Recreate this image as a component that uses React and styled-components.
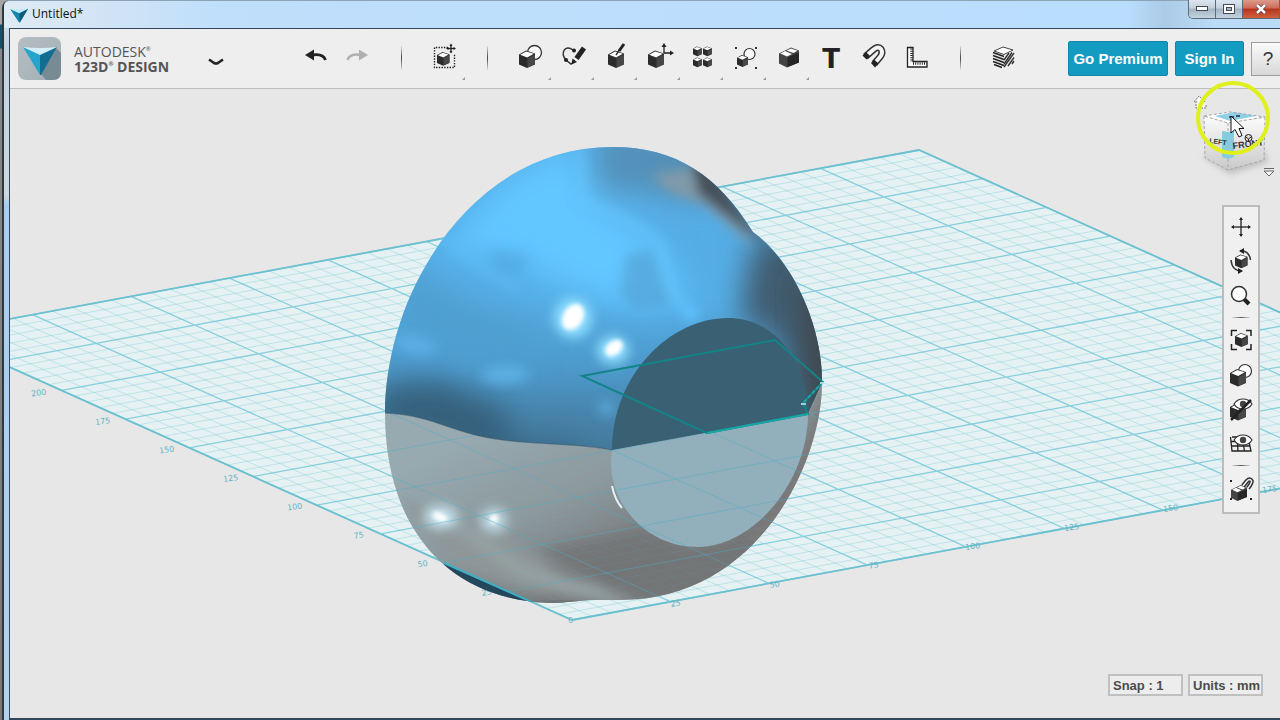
import React from 'react';
import styled, { createGlobalStyle } from 'styled-components';

const GlobalStyle = createGlobalStyle`
  * {
    box-sizing: border-box;
  }
  body {
    margin: 0;
    background: #7d7d7d;
    font-family: "Liberation Sans", Arial, sans-serif;
    overflow: hidden;
  }
  button {
    font-family: inherit;
    padding: 0;
    cursor: pointer;
  }
`;

const Desktop = styled.div`
  min-height: 100vh;
  display: flex;
  padding-left: 2px;
  background: linear-gradient(#a5a5a5 24px, #17506b 25px, #17506b 48px, #85888a 49px, #777 100%);
`;

const Window = styled.div`
  flex: 1;
  min-width: 0;
  display: flex;
  flex-direction: column;
  padding-left: 5px;
  border-left: 2px solid #30373d;
  border-top-left-radius: 8px;
  background: linear-gradient(#d3e4f2, #c3d3de 50px, #ccd6dc 195px, #a8cdf0 205px, #b4d0ea);
`;

const TitleBar = styled.header`
  height: 28px;
  display: flex;
  align-items: flex-start;
  gap: 3px;
  margin-left: -5px;
  padding: 4px 0 0 5px;
  border-top: 1px solid #8ba3b5;
  border-top-left-radius: 6px;
  background: linear-gradient(90deg, #dfebf5, #cfe3f6 9%, #bfdffb 17%, #b9ddfd 88%, #abcbe6 91%, #bbdcf9 95%);
`;

const Title = styled.h1`
  flex: 1;
  margin: 0;
  font: 12px/18px "Open Sans", "Noto Sans", sans-serif;
  color: #111;
`;

const WindowControls = styled.div`
  display: flex;
  height: 19px;
  margin-top: -5px;
  border: 1px solid #5d6b78;
  border-right: 0;
  border-top: 0;
  border-bottom-left-radius: 5px;
  overflow: hidden;
`;

const WindowButton = styled.button`
  width: ${({ $close }) => ($close ? '37px' : '27px')};
  height: 18px;
  display: flex;
  align-items: center;
  justify-content: center;
  border: 0;
  border-right: 1px solid #5d6b78;
  background: ${({ $close }) =>
		$close
			? 'linear-gradient(#dd9a8c, #cf6a56 45%, #b8341c 50%, #cf6040)'
			: 'linear-gradient(#dbe6f0, #c3d0dc 45%, #a4b3c1 50%, #c3d3e0)'};
`;

const Client = styled.main`
  flex: 1;
  display: flex;
  flex-direction: column;
  border: solid #33485c;
  border-width: 1px 0 2px 1px;
  background: #e7e7e7;
`;

const Toolbar = styled.div`
  height: 60px;
  display: flex;
  align-items: center;
  flex: none;
  padding-left: 8px;
  border-bottom: 1px solid #bdbdbd;
  background: #eeeeee;
  overflow: hidden;
`;

const Brand = styled.div`
  width: 108px;
  margin-left: 13px;
  color: #555;
  font: 14px/15px "Open Sans", "Noto Sans", sans-serif;
  white-space: nowrap;
`;

const BrandLine = styled.div`
  font-weight: ${({ $bold }) => ($bold ? 700 : 400)};
`;

const Mark = styled.sup`
  font-size: 6px;
  line-height: 6px;
  vertical-align: 6px;
`;

const MenuButton = styled.button`
  width: 43px;
  height: 43px;
  margin: 8px 57px 0 12px;
  border: 0;
  background: none;
`;

const Tools = styled.div`
  display: flex;
  flex: 1;
`;

const Tool = styled.button`
  width: 43px;
  height: 59px;
  border: 0;
  background: none;
  opacity: ${({ disabled }) => (disabled ? 0.3 : 1)};
  svg {
    display: block;
  }
`;

const Divider = styled.div`
  width: 43px;
  height: 59px;
  display: flex;
  justify-content: center;
  padding: 17px 0 18px;
  &::before {
    content: "";
    width: 1px;
    background: linear-gradient(#ddd, #444 50%, #ddd);
  }
`;

const Account = styled.div`
  display: flex;
  gap: 7px;
  align-items: center;
  margin-right: -5px;
`;

const AccountButton = styled.button`
  width: ${({ $wide }) => ($wide ? '100px' : '69px')};
  height: 35px;
  border: 1px solid #1286a6;
  border-radius: 2px;
  background: #149bc1;
  color: #fff;
  font-size: 15px;
  font-weight: bold;
`;

const HelpButton = styled.button`
  width: 34px;
  height: 34px;
  border: 1px solid #9c9c9c;
  background: linear-gradient(#fafafa, #d8d8d8);
  color: #333;
  font-size: 19px;
`;

const Viewport = styled.section`
  position: relative;
  flex: 1;
  display: flex;
  flex-direction: column;
  justify-content: space-between;
  align-items: flex-end;
  min-height: 620px;
  padding: 116px 17px 22px 0;
`;

const Scene = styled.svg`
  position: absolute;
  inset: 0;
  width: 100%;
  height: 100%;
`;

const CubeWidget = styled.svg`
  position: absolute;
  right: 0;
  top: -9px;
`;

const NavBar = styled.nav`
  position: relative;
  width: 38px;
  margin-right: 3px;
  padding: 3px 0 6px;
  border: 2px solid #bcbcbc;
  background: #f0f0f1;
`;

const NavButton = styled.button`
  display: block;
  width: 34px;
  height: 34px;
  border: 0;
  background: none;
  svg {
    display: block;
  }
`;

const NavDivider = styled.div`
  height: 12px;
  padding: 5px 8px 6px;
  &::before {
    content: "";
    display: block;
    height: 1px;
    background: linear-gradient(90deg, #ddd, #555 50%, #ddd);
  }
`;

const Status = styled.div`
  position: relative;
  display: flex;
  gap: 5px;
`;

const StatusButton = styled.button`
  width: 75px;
  height: 22px;
  padding: 0 3px;
  border: 2px solid #c0c0c0;
  background: #ededed;
  color: #4c4c4c;
  font-size: 13px;
  font-weight: bold;
  text-align: left;
  white-space: nowrap;
`;

/* ---- small drawings ---- */

const Cube = ({ x, y, s = 1 }) => (
	<g transform={`translate(${x} ${y}) scale(${s})`}>
		<path d="M0 4 7 0 16 3 16 14 8 17.5 0 14Z" fill="#2b2b2b" />
		<path d="M8.5 8 16 4V13.500L8.500 17Z" fill="#484848" />
		<path d="M1.200 4.200 7.200 1 14.800 3.300 8.200 7Z" fill="#fff" />
	</g>
);

const WideCube = ({ x, y, s = 1 }) => (
	<g transform={`translate(${x} ${y}) scale(${s})`}>
		<path d="M0 6 12 0 20 3V15L8 20 0 16Z" fill="#444" />
		<path d="M8.500 10 20 5V15L8.500 19.500Z" fill="#262626" />
		<path d="M1.500 6 6 3.500 13 6.500 8 9Z" fill="#fff" />
		<path d="M7.500 3 12 1 18.500 3.300 14.500 5.500Z" fill="#fff" />
	</g>
);

const Cross = ({ x, y, r, h = 2 }) => (
	<g transform={`translate(${x} ${y})`} stroke="#222" strokeWidth="1.300" fill="#222">
		{[0, 90, 180, 270].map((a) => (
			<g key={a} transform={`rotate(${a})`}>
				<path d={`M0 0V${1 - r}`} />
				<path d={`M${-h} ${h + 1 - r}L0 ${-r}L${h} ${h + 1 - r}Z`} stroke="none" />
			</g>
		))}
	</g>
);

const Eye = ({ x, y }) => (
	<g transform={`translate(${x} ${y})`}>
		<path d="M-9 0Q-6 -5 0 -5Q6 -5 9 0Q6 5 0 5Q-6 5 -9 0Z" fill="#fff" stroke="#333" strokeWidth="1.200" />
		<circle r="3.200" fill="#444" />
	</g>
);

const Magnet = ({ d, w = 9 }) => (
	<g fill="none">
		<path d={d} stroke="#333" strokeWidth={w} />
		<path d={d} stroke="#f4f4f4" strokeWidth={w - 3} />
	</g>
);

const Plane = ({ size }) => (
	<svg width={size} height={size} viewBox="0 0 43 43" aria-hidden="true">
		<path d="M3 9 22 16 41 8 23 38Z" fill="#1a9cc4" />
		<path d="M3 9 22 16V38Z" fill="#1687ab" />
		<path d="M22 16 41 8 23 38Z" fill="#0f5a78" />
		<path d="M3 9 20 9 41 8 22 18Z" fill="#bfe9f6" />
	</svg>
);

const Logo = () => (
	<svg width="43" height="43" viewBox="0 0 43 43" role="img" aria-label="123D Design">
		<defs>
			<linearGradient id="logoBg" x1="0" y1="0" x2="1" y2="1">
				<stop offset="0" stopColor="#b5bdc1" />
				<stop offset="1" stopColor="#a3b0b6" />
			</linearGradient>
		</defs>
		<rect width="43" height="43" rx="8" fill="url(#logoBg)" />
		<path d="M38 11 43 16V35Q43 43 35 43H28L23 37Z" fill="#788b95" />
		<path d="M5 10 22 17V38Z" fill="#25a4cd" />
		<path d="M22 17 39 10 23 38H22Z" fill="#126d90" />
		<path d="M5 10Q22 12 39 10L22 18Z" fill="#d4eff8" />
	</svg>
);

const tools = [
	{
		name: 'Undo',
		icon: (
			<g>
				<path d="M11 26 20 20.500V31.500Z" fill="#222" />
				<path d="M18 26Q29 24 31.500 31" fill="none" stroke="#222" strokeWidth="2.800" />
			</g>
		),
	},
	{
		name: 'Redo',
		disabled: true,
		icon: (
			<g>
				<path d="M31 26 22 20.500V31.500Z" fill="#222" />
				<path d="M24 26Q13 24 10.500 31" fill="none" stroke="#222" strokeWidth="2.400" />
			</g>
		),
	},
	{ divider: true, name: 'd1' },
	{
		name: 'Transform selection',
		more: true,
		icon: (
			<g>
				<path d="M25 18.500H11.500V38.500H31.500V25" fill="none" stroke="#222" strokeWidth="1.400" strokeDasharray="1.400 1.300" />
				<Cube x={14} y={23} s={0.78} />
				<Cross x={28} y={19.500} r={5} h={1.500} />
			</g>
		),
	},
	{ divider: true, name: 'd2' },
	{
		name: 'Primitives',
		more: true,
		icon: (
			<g>
				<circle cx="25.500" cy="23.500" r="7" fill="#f8f8f8" stroke="#333" strokeWidth="1.300" />
				<Cube x={10} y={21.500} />
			</g>
		),
	},
	{
		name: 'Sketch',
		more: true,
		icon: (
			<g>
				<path d="M21 21C13 15 8 24 14 31L19 35 23 32" fill="none" stroke="#333" strokeWidth="1.500" />
				<circle cx="22" cy="21.500" r="2" fill="#222" />
				<circle cx="14" cy="31" r="2" fill="#222" />
				<path d="M19.500 35.500 20.500 29.500 25 33Z" fill="#222" />
				<path d="M24.500 29.500 32 19" stroke="#222" strokeWidth="5" />
			</g>
		),
	},
	{
		name: 'Construct',
		more: true,
		icon: (
			<g>
				<Cube x={13} y={21.500} />
				<path d="M21 26 25 20" stroke="#333" strokeWidth="1.500" />
				<path d="M24 22 29 15" stroke="#222" strokeWidth="3" />
			</g>
		),
	},
	{
		name: 'Modify',
		more: true,
		icon: (
			<g>
				<Cube x={10} y={21.500} />
				<path d="M26 24V17M26 24H33" stroke="#222" strokeWidth="1.300" />
				<path d="M23.500 18 26 14 28.500 18ZM32 21.500 36 24 32 26.500Z" fill="#222" />
			</g>
		),
	},
	{
		name: 'Pattern',
		more: true,
		icon: (
			<g>
				<Cube x={12} y={17.500} s={0.55} />
				<Cube x={22} y={17.500} s={0.55} />
				<Cube x={12} y={28.500} s={0.55} />
				<Cube x={22} y={28.500} s={0.55} />
			</g>
		),
	},
	{
		name: 'Grouping',
		more: true,
		icon: (
			<g>
				<circle cx="25.500" cy="25" r="5.500" fill="#f8f8f8" stroke="#333" strokeWidth="1.200" />
				<Cube x={13} y={26} s={0.68} />
				<path d="M11 18h2v2h-2zM31 18h2v2h-2zM11 38h2v2h-2zM31 38h2v2h-2z" fill="#333" />
			</g>
		),
	},
	{ name: 'Combine', more: true, icon: <WideCube x={12} y={18.500} /> },
	{
		name: 'Text',
		icon: (
			<text x="21" y="39" textAnchor="middle" fontFamily="DejaVu Sans" fontWeight="bold" fontSize="26" fill="#222">
				T
			</text>
		),
	},
	{
		name: 'Snap',
		icon: (
			<g>
				<Magnet d="M12.500 27.500 20 21Q25 16.500 28 20Q30.500 24 27 28L21.500 34.500" w={7} />
				<path d="M9.500 26.500 13 23 17 27 13.500 30.500ZM18 34 21 30.500 25.500 34.500 22 38.500Z" fill="#222" />
			</g>
		),
	},
	{
		name: 'Measure',
		icon: (
			<g fill="none" stroke="#222">
				<path d="M11.500 18.500H17V32.500H31V38H11.500Z" fill="#fff" strokeWidth="1.300" />
				<path d="M15.500 19.500V33M17 34.500H30.500" strokeWidth="2.500" strokeDasharray="1 1.200" />
			</g>
		),
	},
	{ divider: true, name: 'd3' },
	{
		name: 'Material',
		icon: (
			<g>
				<path d="M12 22 21 18 31 21 22 25.500Z" fill="#fff" stroke="#444" />
				<path
					d="M11 23.500 22 27.500M11 26.500 22 30.500M11 29.500 22 33.500M11 32.500 22 36.500M12 35.500 20 38.500"
					stroke="#222"
					strokeWidth="1.600"
				/>
				<path d="M22 31 27 24M22 35 30 23.500M22 38 32 24M26 37 32 28.500M30 35 32 32" stroke="#333" strokeWidth="1.400" />
			</g>
		),
	},
];

const navItems = [
	{ name: 'Pan', icon: <Cross x={17} y={17} r={10} h={2} /> },
	{
		name: 'Orbit',
		icon: (
			<g>
				<Cube x={11} y={10.500} s={0.78} />
				<path d="M16 7Q25 6 26.500 16M18 27Q8 27 7 16" fill="none" stroke="#333" strokeWidth="1.500" />
				<path d="M20 4V10L15 7ZM14 24V30L19 27Z" fill="#222" />
			</g>
		),
	},
	{
		name: 'Zoom',
		icon: (
			<g>
				<path d="M20 21 25 26" stroke="#222" strokeWidth="4" />
				<circle cx="15" cy="16" r="7.500" fill="#fff" stroke="#333" strokeWidth="1.500" />
			</g>
		),
	},
	{ divider: true, name: 'n1' },
	{
		name: 'Fit',
		icon: (
			<g>
				<Cube x={11} y={9} s={0.8} />
				<path d="M7.500 12V6.500H13M22 6.500H27V12M27 20V25.500H22M13 25.500H7.500V20" fill="none" stroke="#222" strokeWidth="1.500" />
			</g>
		),
	},
	{
		name: 'Shading',
		icon: (
			<g>
				<circle cx="21" cy="13" r="6.500" fill="#fff" stroke="#333" strokeWidth="1.200" />
				<Cube x={6} y={11} />
			</g>
		),
	},
	{
		name: 'Hide solids',
		icon: (
			<g>
				<Cube x={6} y={11} />
				<Eye x={19} y={12} />
				<path d="M7 28 27 8" stroke="#222" strokeWidth="2.500" />
			</g>
		),
	},
	{
		name: 'Grid visibility',
		icon: (
			<g>
				<path
					d="M8 11H24L27 25H8L6.500 11M7 15.500H26M7 20H26M13 11 14 25M18 11 20.500 25"
					fill="none"
					stroke="#222"
					strokeWidth="1.300"
				/>
				<Eye x={19} y={14} />
			</g>
		),
	},
	{ divider: true, name: 'n2' },
	{
		name: 'Snap settings',
		icon: (
			<g>
				<WideCube x={7} y={13} s={0.8} />
				<Magnet d="M19 14 23 9Q26 6 27.500 9Q28 11 24 16" w={4.500} />
				<path d="M6 8h2v2h-2zM6 26h2v2h-2zM26 26h2v2h-2z" fill="#222" />
			</g>
		),
	},
];

/* ---- 3D scene ---- */

// screen position of a grid node, a runs along the right axis and b along the left one
const node = (a, b) => [572 + a * 98.5 - b * 63.8, 620 - a * 18.3 - b * 28.7];

const line = (p, q) => `M${p[0]} ${p[1]}L${q[0]} ${q[1]}`;

const gridLines = (major) => {
	let d = '';
	for (let i = 0; i <= 50; i += 1) {
		if ((i % 5 === 0) === major) {
			d += line(node(i / 5, 0), node(i / 5, 10));
			d += line(node(0, i / 5), node(10, i / 5));
		}
	}
	return d;
};

const minorGrid = gridLines(false);
const majorGrid = gridLines(true);

const seam = 'C592 446 570 445 537 443 C485 440 470 434 440 424 C420 417 405 414 385 413';
const seamBack = 'C405 414 420 417 440 424 C470 434 485 440 537 443 C570 445 592 446 612 450';

const upperBody =
	'M385 413 C385 295 470 147 613 147 C675 147 718 175 753 232 ' +
	`C795 262 823 330 822 383 L808 414 L612 450 ${seam} Z`;
const lowerBody =
	`M385 413 ${seamBack} L808 414 L822 383 ` +
	'C822 460 760 600 620 600 L590 600 L557 603 C450 603 385 530 385 413 Z';
const faceTop = 'M612 450 C612 375 670 318 728 318 C775 318 806 360 808 414 Z';
const faceBottom = 'M612 450 L808 414 C808 480 755 547 697 547 C645 547 604 500 612 450 Z';

const axisLabels = [
	...['25', '50', '75', '100', '125', '150', '175', '200'].map((t, i) => ({
		t,
		x: 487 - i * 64,
		y: 595 - i * 28.5,
	})),
	...['25', '50', '75', '100', '125', '150', '175'].map((t, i) => ({
		t,
		x: 676 + i * 99,
		y: 606 - i * 19,
	})),
	{ t: '0', x: 571, y: 623 },
];

const Model = () => (
	<Scene viewBox="10 89 1270 629" preserveAspectRatio="xMinYMin slice" role="img" aria-label="Model on the work plane">
		<defs>
			<clipPath id="upper"><path d={upperBody} /></clipPath>
			<clipPath id="lower"><path d={lowerBody} /></clipPath>
			<filter id="soft" x="-50%" y="-50%" width="200%" height="200%"><feGaussianBlur stdDeviation="15" /></filter>
			<filter id="glow" x="-100%" y="-100%" width="300%" height="300%"><feGaussianBlur stdDeviation="6" /></filter>
			<filter id="edge" x="-50%" y="-50%" width="200%" height="200%"><feGaussianBlur stdDeviation="2" /></filter>
			<linearGradient id="blue" x1="0" y1="0" x2="0" y2="1">
				<stop offset="0" stopColor="#55acE4" />
				<stop offset="0.500" stopColor="#55aee6" />
				<stop offset="0.750" stopColor="#4c97c8" />
				<stop offset="1" stopColor="#44789a" />
			</linearGradient>
			<linearGradient id="grey" gradientUnits="userSpaceOnUse" x1="500" y1="420" x2="590" y2="600">
				<stop offset="0" stopColor="#98a9b0" />
				<stop offset="0.500" stopColor="#8c989c" />
				<stop offset="0.900" stopColor="#77797a" />
			</linearGradient>
		</defs>

		<path d="M572 620L1557 437L919 150L-66 333Z" fill="#e6f1f3" />
		<path d={minorGrid} stroke="#7accd6" strokeOpacity="0.380" fill="none" />
		<path d={majorGrid} stroke="#68c3d6" strokeOpacity="0.750" strokeWidth="1.300" fill="none" />
		<path d="M572 620L1557 437L919 150L-66 333Z" fill="none" stroke="#6cc1d0" strokeWidth="1.800" />
		{axisLabels.map(({ t, x, y }) => (
			<text
				key={`${t}-${x}`}
				x={x}
				y={y}
				transform={`rotate(-8 ${x} ${y})`}
				textAnchor="middle"
				fontFamily="DejaVu Sans"
				fontSize="8"
				fill="#64b3c4"
			>
				{t}
			</text>
		))}

		<path d={upperBody} fill="url(#blue)" />
		<g clipPath="url(#upper)">
			<g filter="url(#soft)">
				<path d="M440 250 500 180 570 140 595 200 655 240 690 300 640 310 570 290 510 260Z" fill="#62c6ff" />
				<path d="M600 130H690L740 190 690 200 640 190 595 190Z" fill="#5290b8" />
				<path d="M370 425 380 385 440 380 490 402 550 425 600 455 500 465Z" fill="#34607c" />
				<path d="M755 240 800 230 850 320V430H800L780 340 740 320 745 280Z" fill="#3f5c6f" />
				<path d="M500 415 590 410 600 440 520 440Z" fill="#4782a8" />
				<path d="M400 260 470 300 540 330 520 370 440 350 390 330Z" fill="#4f9fd0" />
			</g>
			<g filter="url(#soft)">
				<path d="M800 270 850 330V430H812Z" fill="#3f464c" />
			</g>
			<g filter="url(#glow)">
				<path d="M580 145 582 200 640 228 662 245 670 290 692 320" fill="none" stroke="#66c8ff" strokeWidth="7" strokeOpacity="0.700" />
				<path d="M626 255 652 250 672 305 635 310 620 295Z" fill="#529fd1" fillOpacity="0.650" />
				<path d="M650 175 690 168 735 215 755 248 705 205 670 192Z" fill="#819aa9" />
				<path d="M690 155 710 165 768 248 740 226 698 193Z" fill="#455058" />
				<ellipse cx="505" cy="375" rx="24" ry="9" fill="#63b9ee" fillOpacity="0.700" />
				<ellipse cx="415" cy="345" rx="22" ry="9" fill="#5cb2e8" fillOpacity="0.800" transform="rotate(12 415 345)" />
				<path d="M430 225 480 268 520 290" fill="none" stroke="#60bff9" strokeWidth="6" strokeOpacity="0.700" />
				<path d="M490 250 530 255 520 275 495 272Z" fill="#52a7df" fillOpacity="0.600" />
				<ellipse cx="606" cy="408" rx="8" ry="7" fill="#5aa9da" />
				<ellipse cx="573" cy="318" rx="19" ry="20" fill="#8fdfff" />
				<ellipse cx="613" cy="350" rx="16" ry="14" fill="#8fdfff" />
				<ellipse cx="691" cy="313" rx="8" ry="8" fill="#5fc3ff" />
			</g>
			<g filter="url(#edge)" fill="#fff">
				<ellipse cx="573" cy="317" rx="10" ry="14" transform="rotate(30 573 317)" />
				<ellipse cx="614" cy="348" rx="10" ry="7" transform="rotate(-40 614 348)" />
			</g>
		</g>

		<path d={lowerBody} fill="url(#grey)" />
		<g clipPath="url(#lower)">
			<g filter="url(#glow)">
				<path d="M400 500 450 560 520 590 600 600 640 590 560 575 500 530Z" fill="#8f9698" />
				<path d="M540 550 640 530 700 555 790 500 760 560 690 600 610 592Z" fill="#737475" fillOpacity="0.850" />
				<path d="M826 380 812 430 788 490 740 545 770 545 840 450Z" fill="#7b7878" />
				<path d="M425 505 450 520 520 570 610 600 640 610" fill="none" stroke="#9ba9ad" strokeWidth="9" strokeOpacity="0.700" />
				<ellipse cx="441" cy="517" rx="16" ry="11" fill="#c7e5f0" />
				<ellipse cx="494" cy="520" rx="13" ry="12" fill="#c0dbe5" />
			</g>
			<g filter="url(#edge)" fill="#fff">
				<ellipse cx="440" cy="517" rx="8" ry="4" transform="rotate(25 440 517)" />
				<ellipse cx="494" cy="519" rx="4" ry="5" />
			</g>
			<path d="M444 563 530 601 520 612 440 590Z" fill="#24485b" />
			<path d="M530 601 560 600 590 601V610H520Z" fill="#707476" />
		</g>
		<path d={faceBottom} fill="#93afbb" />
		<g clipPath="url(#lower)">
			<path d={minorGrid} stroke="#78cbd8" strokeOpacity="0.080" fill="none" />
			<path d={majorGrid} stroke="#4bb0ca" strokeOpacity="0.450" fill="none" />
			<path d="M444 563 572 620" stroke="#3fb0c4" strokeWidth="2" />
		</g>
		<path d="M612 486Q615 500 622 508" fill="none" stroke="#e6f1f5" strokeWidth="2" />
		<path d={faceTop} fill="#3a6074" />
		<path d={`M612 450 ${seam}`} fill="none" stroke="#36566a" strokeOpacity="0.700" />

		<path d="M582 376 775 340 823 382 803 403 808 414 707 433Z" fill="none" stroke="#128488" strokeWidth="2" />
		<path d="M823 382 803 403" stroke="#17a5a5" strokeWidth="2" strokeDasharray="4 2" />
		<path d="M707 433 808 414" stroke="#17a5a5" strokeWidth="2" />
		<path d="M820 383h5M801 404h5" stroke="#c8f0f2" strokeWidth="1.500" />
	</Scene>
);

const ViewCube = () => (
	<CubeWidget width="90" height="100" viewBox="0 0 90 100" role="img" aria-label="View cube">
		<defs>
			<linearGradient id="cubeSide" x1="0" y1="0" x2="0" y2="1">
				<stop offset="0" stopColor="#fbfbfb" />
				<stop offset="1" stopColor="#c9c9c9" />
			</linearGradient>
			<filter id="cubeShadow" x="-50%" y="-50%" width="200%" height="200%"><feGaussianBlur stdDeviation="3" /></filter>
		</defs>
		<path d="M12 76 40 94 78 82 74 70Z" fill="#bdbdbd" filter="url(#cubeShadow)" />
		<path d="M14 36 38 43V90L15 78Z" fill="url(#cubeSide)" />
		<path d="M38 43 75 38 74 80 38 90Z" fill="url(#cubeSide)" />
		<path d="M14 36 40 32 75 37 38 43Z" fill="#fff" />
		<path d="M25 36 44 32 66 36 40 41Z" fill="#8fd0e6" />
		<path d="M32 51 38 52V79L32 77ZM38 52 44 51V77L38 79Z" fill="#86cbe0" />
		<path d="M14 36 40 32 75 37 38 43ZM14 36 15 78 38 90 74 80 75 37M38 43V52M38 79V90" fill="none" stroke="#a6a6a6" strokeDasharray="3 2" />
		<g fontFamily="Liberation Sans Narrow, Liberation Sans" fontWeight="bold" fill="#333">
			<text x="19" y="63" fontSize="7" transform="rotate(8 19 63)">LEFT</text>
			<text x="43" y="69" fontSize="9" transform="rotate(-7 43 69)">FRONT</text>
		</g>
		<path d="M39 37h5M46 36h4" stroke="#234" strokeWidth="1.500" />
		<path d="M4 22 9 16 15 22M6 21V28H16V24" fill="#f8f8f8" stroke="#777" strokeDasharray="2 1" />
		<circle cx="43" cy="38" r="35" fill="none" stroke="#dff01c" strokeWidth="4" />
		<path d="M41 36V53L45 49.500 49 57 52 55.500 49 48.500H54Z" fill="#fff" stroke="#111" />
		<circle cx="58.500" cy="58" r="3.500" fill="#ddd" stroke="#222" />
		<path d="M56 57 58.500 59 61 57M58.500 59V62" fill="none" stroke="#222" />
		<path d="M74 88.500H84M74 91H84L79 96Z" fill="#fafafa" stroke="#666" />
	</CubeWidget>
);

const App = () => (
	<>
		<GlobalStyle />
		<Desktop>
			<Window>
				<TitleBar>
					<Plane size={20} />
					<Title>Untitled*</Title>
					<WindowControls>
						<WindowButton aria-label="Minimize">
							<svg width="12" height="6"><rect x="0.500" y="0.500" width="11" height="4" fill="#fff" stroke="#444b55" /></svg>
						</WindowButton>
						<WindowButton aria-label="Maximize">
							<svg width="12" height="10">
								<rect x="0.500" y="0.500" width="11" height="9" fill="#fff" stroke="#444b55" />
								<rect x="3.500" y="3.500" width="5" height="3" fill="#a9b8c6" stroke="#444b55" />
							</svg>
						</WindowButton>
						<WindowButton $close aria-label="Close">
							<svg width="12" height="10">
								<path d="M2 1 10 9M10 1 2 9" stroke="#55333a" strokeWidth="4" />
								<path d="M2 1 10 9M10 1 2 9" stroke="#fff" strokeWidth="2.500" />
							</svg>
						</WindowButton>
					</WindowControls>
				</TitleBar>
				<Client>
					<Toolbar>
						<Logo />
						<Brand>
							<BrandLine>AUTODESK<Mark>®</Mark></BrandLine>
							<BrandLine $bold>123D<Mark>®</Mark> DESIGN</BrandLine>
						</Brand>
						<MenuButton aria-label="Menu">
							<svg width="16" height="10">
								<path d="M1 2.500 6 6Q8 7 10 6L15 2.500" fill="none" stroke="#222" strokeWidth="2.600" />
							</svg>
						</MenuButton>
						<Tools>
							{tools.map((tool) =>
								tool.divider ? (
									<Divider key={tool.name} />
								) : (
									<Tool key={tool.name} aria-label={tool.name} disabled={tool.disabled}>
										<svg width="43" height="59" viewBox="0 0 43 59">
											{tool.icon}
											{tool.more && <path d="M42 48V51H39Z" fill="#999" />}
										</svg>
									</Tool>
								)
							)}
						</Tools>
						<Account>
							<AccountButton $wide>Go Premium</AccountButton>
							<AccountButton>Sign In</AccountButton>
							<HelpButton aria-label="Help">?</HelpButton>
						</Account>
					</Toolbar>
					<Viewport>
						<Model />
						<ViewCube />
						<NavBar>
							{navItems.map((item) =>
								item.divider ? (
									<NavDivider key={item.name} />
								) : (
									<NavButton key={item.name} aria-label={item.name}>
										<svg width="34" height="34" viewBox="0 0 34 34">{item.icon}</svg>
									</NavButton>
								)
							)}
						</NavBar>
						<Status>
							<StatusButton>Snap : 1</StatusButton>
							<StatusButton>Units : mm</StatusButton>
						</Status>
					</Viewport>
				</Client>
			</Window>
		</Desktop>
	</>
);

export default App;
